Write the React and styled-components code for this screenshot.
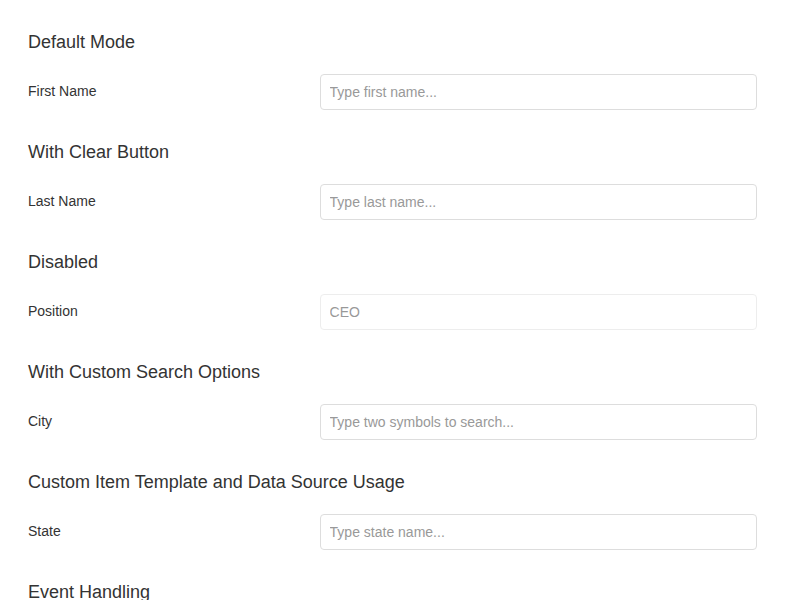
import React from 'react';
import styled, { createGlobalStyle } from 'styled-components';

const GlobalStyle = createGlobalStyle`
    html, body {
        margin: 0;
        background: #fff;
    }
    body {
        font-family: "Liberation Sans", Arial, sans-serif;
        color: #333;
    }
`;

const Page = styled.div`
    padding: 31px 28px 0;
`;

const Section = styled.div`
    margin-bottom: 31px;
`;

const Header = styled.div`
    font-size: 18px;
    line-height: 23px;
    font-weight: 400;
    color: #333;
    margin-bottom: 20px;
`;

const Field = styled.div`
    display: flex;
    align-items: center;
    height: 36px;
`;

const Label = styled.div`
    width: 40%;
    font-size: 14px;
    line-height: 18px;
    color: #333;
    margin-top: -2px;
`;

const Value = styled.div`
    width: 60%;
`;

const Input = styled.input`
    box-sizing: border-box;
    width: 100%;
    height: 36px;
    padding: 7px 9px 8px;
    line-height: 18px;
    border: 1px solid #ddd;
    border-radius: 4px;
    font-family: "Liberation Sans", Arial, sans-serif;
    font-size: 14px;
    color: #333;
    background: #fff;
    outline: none;
    opacity: ${(p) => (p.disabled ? 0.5 : 1)};

    &::placeholder {
        color: #999;
    }
`;

const App = () => {
    const sections = [
        { title: 'Default Mode', label: 'First Name', placeholder: 'Type first name...' },
        { title: 'With Clear Button', label: 'Last Name', placeholder: 'Type last name...' },
        { title: 'Disabled', label: 'Position', value: 'CEO', disabled: true },
        { title: 'With Custom Search Options', label: 'City', placeholder: 'Type two symbols to search...' },
        { title: 'Custom Item Template and Data Source Usage', label: 'State', placeholder: 'Type state name...' },
        { title: 'Event Handling', label: 'Full Name', placeholder: 'Type full name...' },
    ];

    return (
        <>
            <GlobalStyle />
            <Page>
                {sections.map((s, index) => (
                    <Section key={index}>
                        <Header>{s.title}</Header>
                        <Field>
                            <Label>{s.label}</Label>
                            <Value>
                                <Input
                                    placeholder={s.placeholder}
                                    defaultValue={s.value}
                                    disabled={s.disabled}
                                />
                            </Value>
                        </Field>
                    </Section>
                ))}
            </Page>
        </>
    );
};

export default App;
